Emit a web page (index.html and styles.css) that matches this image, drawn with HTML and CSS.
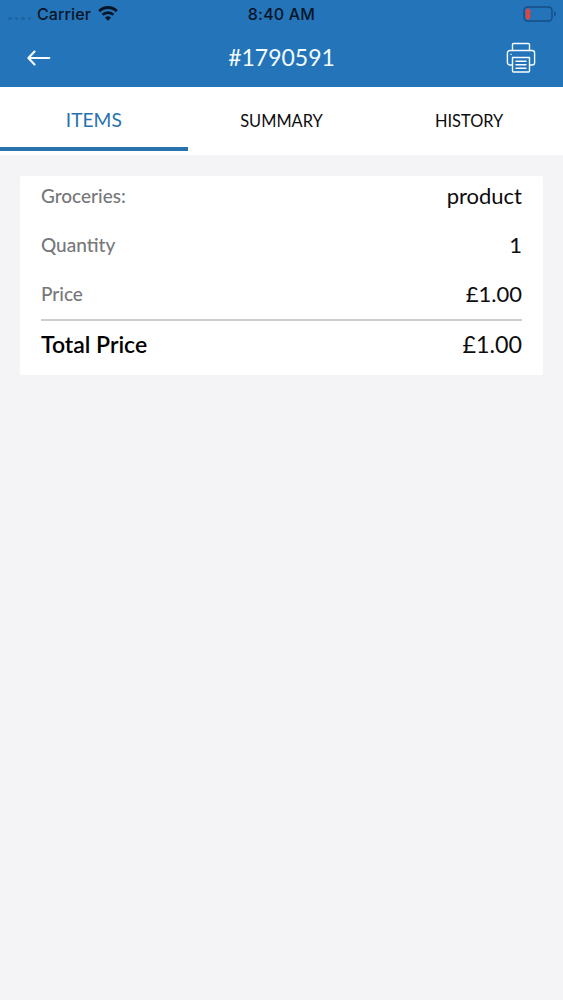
FILE: index.html
```html
<!DOCTYPE html>
<html lang="en">
<head>
<meta charset="utf-8">
<title>#1790591</title>
<link rel="stylesheet" href="styles.css">
</head>
<body>
<header class="header">
  <div class="status">
    <div class="carrier">
      <span class="signal"><i></i><i></i><i></i><i></i></span>
      <span class="carrier-name">Carrier</span>
      <svg class="wifi" width="20" height="15" viewBox="0 0 20 15">
        <path d="M1.2 5.2a12.6 12.6 0 0 1 17.6 0" fill="none" stroke="currentColor" stroke-width="3"/>
        <path d="M4.6 8.8a7.8 7.8 0 0 1 10.8 0" fill="none" stroke="currentColor" stroke-width="2.6"/>
        <path d="M7 11.7a4.4 4.4 0 0 1 6 0l-3 3z" fill="currentColor"/>
      </svg>
    </div>
    <div class="time">8:40 AM</div>
    <svg class="battery" width="34" height="16" viewBox="0 0 34 16">
      <rect x="1" y="1" width="28" height="14" rx="3.5" fill="none" stroke="#174d85" stroke-width="1.4"/>
      <rect x="2.8" y="2.8" width="4.4" height="10.4" rx="1.6" fill="#e0453f"/>
      <path d="M31 5.5a2.6 2.6 0 0 1 0 5z" fill="#174d85"/>
    </svg>
  </div>
  <div class="nav">
    <svg class="back" width="24" height="16" viewBox="0 0 24 16" fill="none" stroke="currentColor" stroke-width="2.1" stroke-linecap="round" stroke-linejoin="round">
      <path d="M22.300 8H1.600M7.500 1.500L1.400 8L7.500 14.500"/>
    </svg>
    <h1 class="title">#1790591</h1>
    <svg class="print" width="30" height="32" viewBox="0 0 30 32" fill="none" stroke="currentColor" stroke-width="1.4" stroke-linecap="round" stroke-linejoin="round">
      <path d="M6.500 8.500V2.500a1 1 0 0 1 1-1h15a1 1 0 0 1 1 1V8.500"/>
      <path d="M6.500 23H4a2.600 2.600 0 0 1-2.600-2.600V11.100A2.600 2.600 0 0 1 4 8.500h22a2.600 2.600 0 0 1 2.600 2.600v9.300A2.600 2.600 0 0 1 26 23h-2.500"/>
      <path d="M6.500 15.500h17v13.500a1 1 0 0 1-1 1h-15a1 1 0 0 1-1-1z"/>
      <path d="M10 19.300h10M10 22.800h10M10 26.300h10M5 12.400h.2"/>
    </svg>
  </div>
</header>
<nav class="tabs">
  <div class="tab active">ITEMS</div>
  <div class="tab">SUMMARY</div>
  <div class="tab">HISTORY</div>
</nav>
<main class="card">
  <div class="row"><span class="label">Groceries:</span><span class="value">product</span></div>
  <div class="row"><span class="label">Quantity</span><span class="value">1</span></div>
  <div class="row"><span class="label">Price</span><span class="value">£1.00</span></div>
  <div class="row total"><span class="label">Total Price</span><span class="value">£1.00</span></div>
</main>
</body>
</html>
```

FILE: styles.css
```css
* { box-sizing: border-box; }
body {
  margin: 0;
  min-height: 1000px;
  background: #f4f3f6;
  color: #0c0c0e;
  font-family: Lato, "Liberation Sans", sans-serif;
}
.header {
  height: 87px;
  background: #2474ba;
  color: #f4fcff;
}
.status {
  display: grid;
  grid-template-columns: 1fr auto 1fr;
  align-items: center;
  height: 28px;
  padding: 0 6px 0 8px;
  color: #061426;
  font: 500 16px/28px Inter, sans-serif;
}
.carrier { display: flex; align-items: center; }
.signal { display: flex; gap: 3px; width: 29px; padding-top: 9px; }
.signal i { width: 3.5px; height: 3.5px; border-radius: 2px; background: #1e64a3; }
.carrier-name { width: 61px; letter-spacing: 0.1px; }
.wifi { margin-top: -2px; }
.time { padding-right: 2px; letter-spacing: 0.2px; }
.battery { margin-top: -1px; justify-self: end; }
.nav {
  display: grid;
  grid-template-columns: 1fr auto 1fr;
  align-items: center;
  height: 59px;
  padding: 0 27px;
}
.title { margin: 0; padding-bottom: 2px; font-size: 23px; font-weight: 400; line-height: 28px; }
.print { justify-self: end; }
.tabs {
  display: grid;
  grid-template-columns: repeat(3, 1fr);
  height: 68px;
  padding-bottom: 4px;
  background: #fff;
}
.tab {
  display: flex;
  align-items: center;
  justify-content: center;
  padding-top: 7px;
  border-bottom: 4px solid transparent;
  font-size: 16.4px;
}
.tab.active {
  padding-top: 5px;
  border-color: #2872ae;
  color: #2872ae;
  font-size: 19.2px;
}
.card {
  height: 199px;
  margin: 21px 20px 0;
  padding: 0 21px;
  background: #fff;
  border-radius: 2px;
}
.row {
  display: flex;
  align-items: center;
  justify-content: space-between;
  height: 49px;
  padding-bottom: 2px;
}
.row:first-child { height: 45px; padding-bottom: 6px; }
.row .label { color: #77777a; font-size: 19px; font-weight: 500; }
.value { font-size: 22px; }
.row.total { height: 51px; padding-bottom: 4px; border-top: 2px solid #cdcdcd; }
.row.total .label { color: #000; font-size: 23px; font-weight: 600; }
.row.total .value { font-size: 23.3px; }
```
